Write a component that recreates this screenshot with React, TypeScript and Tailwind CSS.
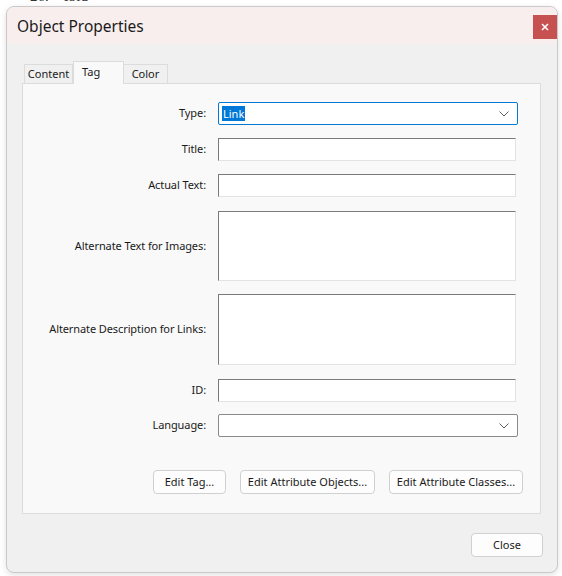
import React from 'react';

const font = { fontFamily: '"Noto Sans", "Open Sans", sans-serif' };

const Chevron: React.FC = () => (
  <svg width="10" height="6" viewBox="0 0 10 6" className="shrink-0">
    <path d="M0.5 0.5 L5 5 L9.5 0.5" fill="none" stroke="#5f5f5f" strokeWidth="1" />
  </svg>
);

const TextBox: React.FC<{ tall?: boolean }> = ({ tall }) => (
  <div
    className={`w-[298px] bg-white border border-t-[#7a7a7a] border-l-[#7a7a7a] border-b-[#e3e3e3] border-r-[#e3e3e3] ${tall ? 'h-[71px]' : 'h-[23px]'}`}
  />
);

const Row: React.FC<{ label: string; children: React.ReactNode; className?: string }> = ({ label, children, className }) => (
  <div className={`flex items-center ${className ?? ''}`}>
    <div className="w-[195px] text-right pr-[12px] text-[11px] tracking-[-0.1px] text-[#1a1a1a]">{label}</div>
    {children}
  </div>
);

const Btn: React.FC<{ children: React.ReactNode; className?: string }> = ({ children, className }) => (
  <button className={`h-[24px] bg-[#fdfdfd] border border-[#d0d0d0] rounded-[4px] text-[11px] text-[#1a1a1a] ${className ?? ''}`}>
    {children}
  </button>
);

const App: React.FC = () => {
  return (
    <div className="w-[562px] h-[576px] bg-white overflow-hidden" style={font}>
      {/* document behind the dialog */}
      <div className="h-[6px] overflow-hidden pl-[30px]">
        <div className="-mt-[12px] text-[15px] leading-[16px] text-[#333]" style={{ fontFamily: '"Liberation Serif", serif' }}>
          26.&nbsp;&nbsp;&nbsp;&nbsp;Ibid
        </div>
      </div>

      <div className="ml-[6px] w-[552px] h-[567px] border border-[#c9c9c9] rounded-[8px] overflow-hidden bg-[#f0f0f0] shadow-[0_2px_6px_rgba(0,0,0,0.12)] flex flex-col">
        {/* title bar */}
        <div className="h-[37px] bg-[#f9eeee] flex items-start justify-between pl-[10px] shrink-0">
          <span className="text-[15.5px] leading-[20px] mt-[9px] text-[#1a1a1a]">Object Properties</span>
          <div className="w-[24px] h-[24px] mt-[8px] bg-[#c75050] flex items-center justify-center">
            <svg width="8" height="8" viewBox="0 0 8 8">
              <path d="M1 1 L7 7 M7 1 L1 7" stroke="white" strokeWidth="1.6" />
            </svg>
          </div>
        </div>

        {/* tabs */}
        <div className="pl-[15px] pr-[16px] pt-[17px]">
          <div className="flex items-end pl-[2px] h-[22px] relative z-10">
            <div className="w-[49px] h-[19px] bg-[#f0f0f0] border border-[#dcdcdc] border-b-0 text-[11px] text-[#1a1a1a] flex items-center justify-center pt-[1px]">
              Content
            </div>
            <div className="w-[51px] h-[23px] -mb-[1px] bg-[#f9f9f9] border border-[#dcdcdc] border-b-0 text-[11px] text-[#1a1a1a] pl-[8px] pt-[2px]">
              Tag
            </div>
            <div className="w-[44px] h-[19px] bg-[#f0f0f0] border border-[#dcdcdc] border-b-0 border-l-0 text-[11px] text-[#1a1a1a] flex items-center justify-center pt-[1px]">
              Color
            </div>
          </div>

          {/* panel */}
          <div className="h-[431px] bg-[#f9f9f9] border border-[#dcdcdc] pt-[18px] flex flex-col">
            <Row label="Type:">
              <div className="w-[300px] h-[23px] bg-white border border-[#0078d4] rounded-[2px] flex items-center justify-between pl-[3px] pr-[8px]">
                <span className="bg-[#0078d7] text-white text-[11px] leading-[15px] px-[1px]">Link</span>
                <Chevron />
              </div>
            </Row>
            <Row label="Title:" className="mt-[13px]">
              <TextBox />
            </Row>
            <Row label="Actual Text:" className="mt-[13px]">
              <TextBox />
            </Row>
            <Row label="Alternate Text for Images:" className="mt-[14px]">
              <div className="w-[298px] h-[70px] bg-white border border-t-[#7a7a7a] border-l-[#7a7a7a] border-b-[#e3e3e3] border-r-[#e3e3e3]" />
            </Row>
            <Row label="Alternate Description for Links:" className="mt-[13px]">
              <TextBox tall />
            </Row>
            <Row label="ID:" className="mt-[14px]">
              <TextBox />
            </Row>
            <Row label="Language:" className="mt-[12px]">
              <div className="w-[300px] h-[23px] bg-white border border-[#8a8a8a] rounded-[2px] flex items-center justify-end pr-[8px]">
                <Chevron />
              </div>
            </Row>
            <div className="flex justify-end gap-[14px] pr-[17px] mt-[33px]">
              <Btn className="w-[73px]">Edit Tag...</Btn>
              <Btn className="w-[135px]">Edit Attribute Objects...</Btn>
              <Btn className="w-[134px]">Edit Attribute Classes...</Btn>
            </div>
          </div>
        </div>

        <div className="flex justify-end pr-[14px] mt-[19px]">
          <Btn className="w-[72px]">Close</Btn>
        </div>
      </div>
    </div>
  );
};

export default App;
